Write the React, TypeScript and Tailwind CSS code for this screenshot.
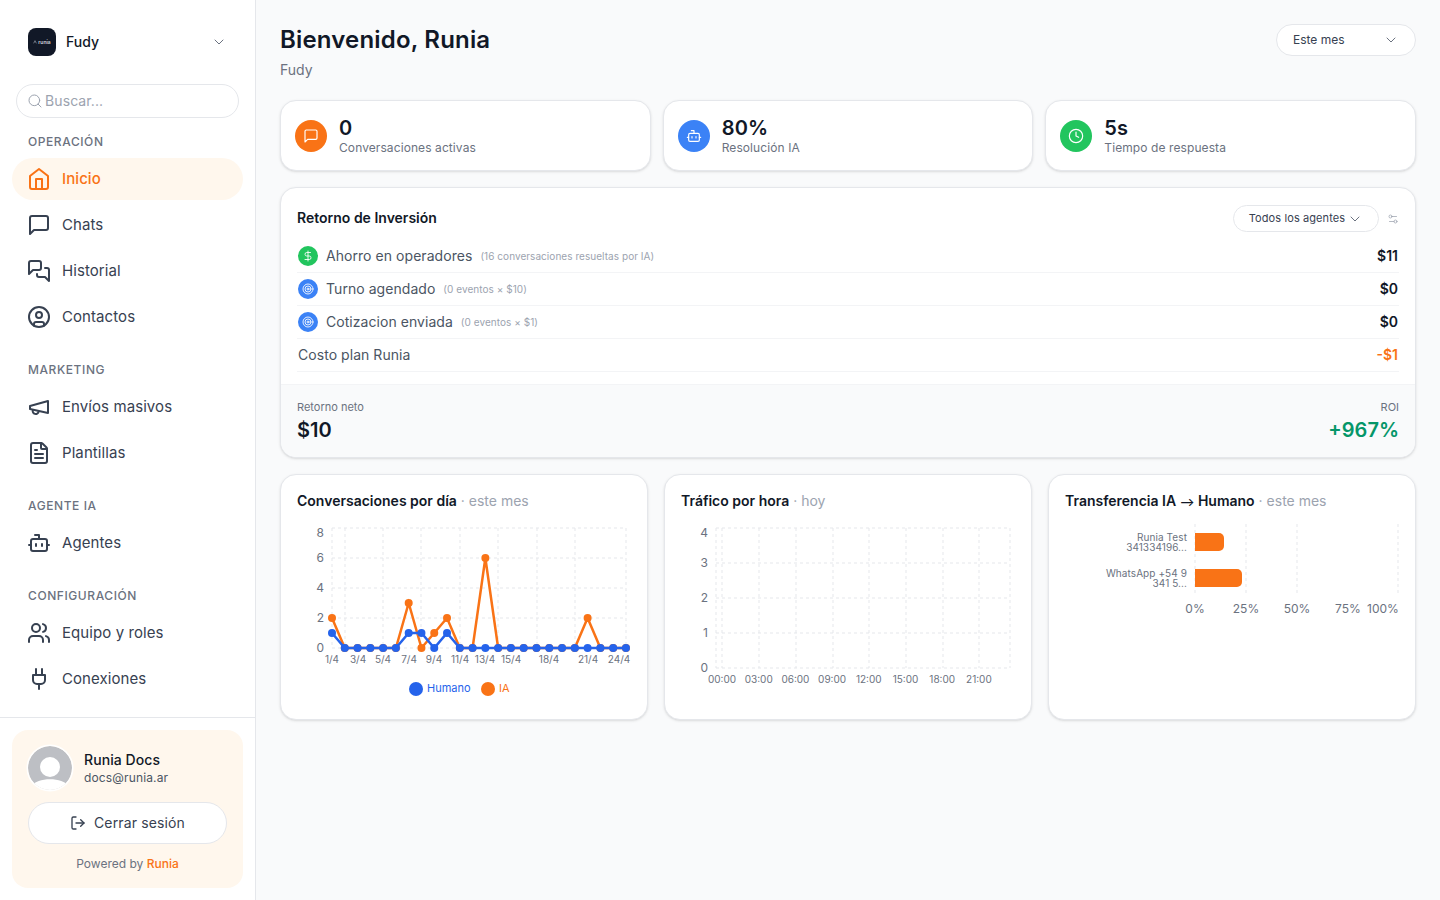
import {
  Bot,
  ChevronDown,
  Clock,
  DollarSign,
  FileText,
  LogOut,
  Search,
  Settings2,
  Target,
  Users,
  CircleUser,
} from "lucide-react";

type IconProps = { className?: string; strokeWidth?: number };

const svgProps = { viewBox: "0 0 24 24", fill: "none", stroke: "currentColor", strokeLinecap: "round", strokeLinejoin: "round" } as const;

const HomeIcon = ({ className, strokeWidth = 2 }: IconProps) => (
  <svg {...svgProps} strokeWidth={strokeWidth} className={className}>
    <path d="m3 9 9-7 9 7v11a2 2 0 0 1-2 2H5a2 2 0 0 1-2-2z" />
    <polyline points="9 22 9 12 15 12 15 22" />
  </svg>
);

const ChatIcon = ({ className, strokeWidth = 2 }: IconProps) => (
  <svg {...svgProps} strokeWidth={strokeWidth} className={className}>
    <path d="M21 15a2 2 0 0 1-2 2H7l-4 4V5a2 2 0 0 1 2-2h14a2 2 0 0 1 2 2z" />
  </svg>
);

const ChatsIcon = ({ className, strokeWidth = 2 }: IconProps) => (
  <svg {...svgProps} strokeWidth={strokeWidth} className={className}>
    <path d="M14 9a2 2 0 0 1-2 2H6l-4 4V4c0-1.1.9-2 2-2h8a2 2 0 0 1 2 2z" />
    <path d="M18 9h2a2 2 0 0 1 2 2v11l-4-4h-6a2 2 0 0 1-2-2v-1" />
  </svg>
);

const MegaphoneIcon = ({ className, strokeWidth = 2 }: IconProps) => (
  <svg {...svgProps} strokeWidth={strokeWidth} className={className}>
    <path d="m3 11 18-5v12L3 14v-3z" />
    <path d="M11.6 16.8a3 3 0 1 1-5.8-1.6" />
  </svg>
);

const PlugIcon = ({ className, strokeWidth = 2 }: IconProps) => (
  <svg {...svgProps} strokeWidth={strokeWidth} className={className}>
    <path d="M12 22v-5" />
    <path d="M9 8V2" />
    <path d="M15 8V2" />
    <path d="M18 8v5a4 4 0 0 1-4 4h-4a4 4 0 0 1-4-4V8Z" />
  </svg>
);

const navSections = [
  { label: "Operación", items: [{ name: "Inicio", icon: HomeIcon, active: true }, { name: "Chats", icon: ChatIcon }, { name: "Historial", icon: ChatsIcon }, { name: "Contactos", icon: CircleUser }] },
  { label: "Marketing", items: [{ name: "Envíos masivos", icon: MegaphoneIcon }, { name: "Plantillas", icon: FileText }] },
  { label: "Agente IA", items: [{ name: "Agentes", icon: Bot }] },
  { label: "Configuración", items: [{ name: "Equipo y roles", icon: Users }, { name: "Conexiones", icon: PlugIcon }] },
];

const Sidebar = () => (
  <aside className="flex h-screen w-[256px] shrink-0 flex-col border-r border-[#e5e7eb] bg-white">
    <div className="flex items-center pl-7 pr-[28px] pt-7">
      <div className="flex h-7 w-7 items-center justify-center gap-px rounded-lg bg-[#111827]">
        <svg viewBox="0 0 6 6" className="h-1 w-1 text-[#9ca3af]" fill="none" stroke="currentColor" strokeWidth="1">
          <path d="M1 5 3 1l2 4" />
        </svg>
        <span className="text-[5px] font-semibold leading-none text-[#d1d5db]">runia</span>
      </div>
      <span className="ml-2.5 text-sm font-medium text-[#111827]">Fudy</span>
      <ChevronDown className="ml-auto h-4 w-4 text-[#6b7280]" strokeWidth={1.5} />
    </div>
    <div className="mx-4 mt-7 flex h-[34px] items-center gap-0.5 rounded-full border border-[#e5e7eb] pl-[10px]">
      <Search className="h-4 w-4 text-[#9ca3af]" strokeWidth={1.5} />
      <span className="text-sm tracking-[0.1px] text-[#9ca3af]">Buscar...</span>
    </div>
    <nav>
      {navSections.map((section, i) => (
        <div key={section.label} className={i === 0 ? "mt-4" : "mt-6"}>
          <div className="px-7 text-xs font-medium uppercase leading-4 tracking-[0.58px] text-[#6b7280]">{section.label}</div>
          <div className="mt-2 flex flex-col gap-1 px-3">
            {section.items.map((item) => {
              const Icon = item.icon;
              const active = "active" in item && item.active;
              return (
                <div
                  key={item.name}
                  className={`flex h-[42px] items-center gap-[11px] rounded-full pl-[15px] text-[15px] tracking-[0.08px] ${
                    active ? "bg-[#fff7ed] font-medium text-[#f97316]" : "text-[#374151]"
                  }`}
                >
                  <Icon className="h-6 w-6" strokeWidth={2} />
                  {item.name}
                </div>
              );
            })}
          </div>
        </div>
      ))}
    </nav>
    <div className="mt-auto border-t border-[#e5e7eb] p-3">
      <div className="h-[158px] rounded-2xl bg-[#fff7ed] px-4 pt-4">
        <div className="flex items-center gap-3">
          <svg viewBox="0 0 44 44" className="h-11 w-11 rounded-full ring-[1.5px] ring-white">
            <circle cx="22" cy="22" r="22" fill="#bdbfc4" />
            <circle cx="22" cy="21" r="10" fill="#fff" />
            <path d="M4 40c4-9 32-9 36 0l-6 8H10z" fill="#fff" />
          </svg>
          <div>
            <div className="text-sm font-medium leading-[18px] tracking-[0.08px] text-[#111827]">Runia Docs</div>
            <div className="mt-px text-xs leading-4 tracking-[0.14px] text-[#4b5563]">docs@runia.ar</div>
          </div>
        </div>
        <div className="mt-3 flex h-[42px] items-center justify-center gap-2 rounded-full border border-[#e5e7eb] bg-white text-sm tracking-[0.14px] text-[#374151]">
          <LogOut className="h-4 w-4" strokeWidth={2} />
          Cerrar sesión
        </div>
        <div className="mt-3 text-center text-xs leading-4 text-[#6b7280]">
          Powered by <span className="font-medium text-[#f97316]">Runia</span>
        </div>
      </div>
    </div>
  </aside>
);

const stats = [
  { value: "0", label: "Conversaciones activas", icon: ChatIcon, bg: "bg-[#f97316]" },
  { value: "80%", label: "Resolución IA", icon: Bot, bg: "bg-[#3b82f6]" },
  { value: "5s", label: "Tiempo de respuesta", icon: Clock, bg: "bg-[#22c55e]" },
];

const StatCard = ({ stat }: { stat: (typeof stats)[number] }) => {
  const Icon = stat.icon;
  return (
    <div className="flex h-[71px] items-center gap-3 rounded-2xl border border-[#e5e7eb] bg-white px-3.5 shadow-sm">
      <div className={`flex h-8 w-8 items-center justify-center rounded-full text-white ${stat.bg}`}>
        <Icon className="h-4 w-4" strokeWidth={1.75} />
      </div>
      <div>
        <div className="text-xl font-semibold leading-6 tracking-[0.2px] text-[#111827]">{stat.value}</div>
        <div className="text-xs leading-4 tracking-[0.09px] text-[#6b7280]">{stat.label}</div>
      </div>
    </div>
  );
};

const roiRows = [
  { name: "Ahorro en operadores", note: "(16 conversaciones resueltas por IA)", value: "$11", icon: DollarSign, bg: "bg-[#22c55e]" },
  { name: "Turno agendado", note: "(0 eventos × $10)", value: "$0", icon: Target, bg: "bg-[#3b82f6]" },
  { name: "Cotizacion enviada", note: "(0 eventos × $1)", value: "$0", icon: Target, bg: "bg-[#3b82f6]" },
];

const RoiCard = () => (
  <div className="mt-4 overflow-hidden rounded-2xl border border-[#e5e7eb] bg-white shadow-sm">
    <div className="px-4 pb-3 pt-[17px]">
      <div className="flex items-center">
        <h2 className="-mt-px text-sm font-semibold text-[#111827]">Retorno de Inversión</h2>
        <div className="ml-auto flex h-[27px] w-[146px] items-center justify-center gap-0.5 rounded-full border border-[#e5e7eb] text-[11px] tracking-[0.1px] text-[#374151]">
          Todos los agentes
          <ChevronDown className="h-4 w-4 text-[#6b7280]" strokeWidth={1.5} />
        </div>
        <Settings2 className="ml-2 h-3 w-3 text-[#9ca3af]" strokeWidth={1.5} />
      </div>
      <div className="mt-2">
        {roiRows.map((row) => {
          const Icon = row.icon;
          return (
            <div key={row.name} className="flex h-[33px] items-center border-b border-[#f3f4f6] pl-px">
              <div className={`flex h-5 w-5 items-center justify-center rounded-full text-white ${row.bg}`}>
                <Icon className="h-3 w-3" strokeWidth={1.75} />
              </div>
              <span className="ml-2 text-sm tracking-[0.05px] text-[#4b5563]">{row.name}</span>
              <span className="ml-2 text-[10px] tracking-[0.05px] text-[#9ca3af]">{row.note}</span>
              <span className="ml-auto pr-px text-sm font-semibold text-[#111827]">{row.value}</span>
            </div>
          );
        })}
        <div className="flex h-[33px] items-center border-b border-[#f3f4f6] pl-px">
          <span className="text-sm tracking-[0.05px] text-[#4b5563]">Costo plan Runia</span>
          <span className="ml-auto pr-px text-sm font-semibold text-[#f97316]">-$1</span>
        </div>
      </div>
    </div>
    <div className="flex h-[73px] items-center justify-between border-t border-[#f3f4f6] bg-[#f9fafb] px-4 pt-px">
      <div>
        <div className="text-[11px] leading-4 text-[#6b7280]">Retorno neto</div>
        <div className="mt-px text-xl font-semibold leading-7 text-[#111827]">$10</div>
      </div>
      <div className="text-right">
        <div className="text-[11px] leading-4 text-[#6b7280]">ROI</div>
        <div className="mt-px text-xl font-semibold leading-7 text-[#059669]">+967%</div>
      </div>
    </div>
  </div>
);

const Grid = ({ xs, ys, x1, x2, y1, y2 }: { xs: number[]; ys: number[]; x1: number; x2: number; y1: number; y2: number }) => (
  <g stroke="#e5e7eb" strokeDasharray="3 3" strokeWidth="1" fill="none">
    {xs.map((x) => (
      <line key={`x${x}`} x1={x} x2={x} y1={y1} y2={y2} />
    ))}
    {ys.map((y) => (
      <line key={`y${y}`} x1={x1} x2={x2} y1={y} y2={y} />
    ))}
  </g>
);

const ia = [2, 0, 0, 0, 0, 0, 3, 0, 1, 2, 0, 0, 6, 0, 0, 0, 0, 0, 0, 0, 2, 0, 0, 0];
const humano = [1, 0, 0, 0, 0, 0, 1, 1, 0, 1, 0, 0, 0, 0, 0, 0, 0, 0, 0, 0, 0, 0, 0, 0];
const px = (i: number) => 332 + i * 12.78;
const py = (v: number) => 648 - v * 15;
const pts = (d: number[]) => d.map((v, i) => `${px(i)},${py(v)}`).join(" ");

const ConversationsChart = () => (
  <svg viewBox="297 520 334 190" className="mt-[9px] h-[190px] w-[334px]">
    <Grid xs={[332, 345, 383, 421, 460, 498, 537, 575, 626]} ys={[528, 558, 588, 618, 648]} x1={332} x2={626} y1={528} y2={648} />
    <g fontSize="12" fill="#6b7280" textAnchor="end">
      <text x="324" y="537">8</text>
      <text x="324" y="562">6</text>
      <text x="324" y="592">4</text>
      <text x="324" y="622">2</text>
      <text x="324" y="652">0</text>
    </g>
    <g fontSize="10" fill="#6b7280" textAnchor="middle">
      {[[332, "1/4"], [358, "3/4"], [383, "5/4"], [409, "7/4"], [434, "9/4"], [460, "11/4"], [485, "13/4"], [511, "15/4"], [549, "18/4"], [588, "21/4"], [619, "24/4"]].map(([x, t]) => (
        <text key={t} x={x} y="663">{t}</text>
      ))}
    </g>
    <polyline points={pts(ia)} fill="none" stroke="#f97316" strokeWidth="2.5" />
    {ia.map((v, i) => (
      <circle key={i} cx={px(i)} cy={py(v)} r="4" fill="#f97316" />
    ))}
    <polyline points={pts(humano)} fill="none" stroke="#2563eb" strokeWidth="2.5" />
    {humano.map((v, i) => (
      <circle key={i} cx={px(i)} cy={py(v)} r="4" fill="#2563eb" />
    ))}
    <circle cx="416" cy="689" r="7" fill="#2563eb" />
    <text x="427" y="692" fontSize="11" fill="#2563eb">Humano</text>
    <circle cx="488" cy="689" r="7" fill="#f97316" />
    <text x="499" y="692" fontSize="11" fill="#f97316">IA</text>
  </svg>
);

const TrafficChart = () => (
  <svg viewBox="681 520 334 190" className="mt-[9px] h-[190px] w-[334px]">
    <Grid xs={[716, 722, 759, 796, 833, 869, 906, 943, 979, 1010]} ys={[528, 563, 598, 633, 668]} x1={716} x2={1010} y1={528} y2={668} />
    <g fontSize="12" fill="#6b7280" textAnchor="end">
      <text x="708" y="537">4</text>
      <text x="708" y="567">3</text>
      <text x="708" y="602">2</text>
      <text x="708" y="637">1</text>
      <text x="708" y="672">0</text>
    </g>
    <g fontSize="10" fill="#6b7280" textAnchor="middle">
      {["00:00", "03:00", "06:00", "09:00", "12:00", "15:00", "18:00", "21:00"].map((t, i) => (
        <text key={t} x={722 + i * 36.7} y="683">{t}</text>
      ))}
    </g>
  </svg>
);

const TransferChart = () => (
  <svg viewBox="1065 520 334 190" className="mt-[9px] h-[190px] w-[334px]">
    <Grid xs={[1195, 1246, 1297, 1398]} ys={[]} x1={1195} x2={1398} y1={523} y2={592} />
    <path d="M1195 532h24a5 5 0 0 1 5 5v8a5 5 0 0 1-5 5h-24z" fill="#f97316" />
    <path d="M1195 568h42a5 5 0 0 1 5 5v8a5 5 0 0 1-5 5h-42z" fill="#f97316" />
    <g fontSize="10" fill="#6b7280" textAnchor="end" letterSpacing="0.08">
      <text x="1187" y="540">Runia Test</text>
      <text x="1187" y="550">341334196...</text>
      <text x="1187" y="576">WhatsApp +54 9</text>
      <text x="1187" y="586">341 5...</text>
    </g>
    <g fontSize="12" fill="#6b7280" textAnchor="middle">
      <text x="1195" y="612">0%</text>
      <text x="1246" y="612">25%</text>
      <text x="1297" y="612">50%</text>
      <text x="1348" y="612">75%</text>
      <text x="1383" y="612">100%</text>
    </g>
  </svg>
);

const ChartCard = ({ title, period, children }: { title: React.ReactNode; period: string; children: React.ReactNode }) => (
  <div className="h-[246px] rounded-2xl border border-[#e5e7eb] bg-white px-4 pt-4 shadow-sm">
    <div className="text-sm leading-5">
      <span className="font-semibold text-[#111827]">{title}</span>
      <span className="text-[#9ca3af]"> · {period}</span>
    </div>
    {children}
  </div>
);

export default function App() {
  return (
    <div className="flex h-screen bg-[#f9fafb] [font-family:Inter,sans-serif]">
      <Sidebar />
      <main className="flex-1 px-6 pt-6">
        <div className="mb-5 flex items-start justify-between">
          <div>
            <h1 className="text-2xl font-semibold leading-8 tracking-[0.18px] text-[#111827]">Bienvenido, Runia</h1>
            <p className="mt-1 text-sm leading-5 text-[#6b7280]">Fudy</p>
          </div>
          <div className="flex h-8 w-[140px] items-center justify-between rounded-full border border-[#e5e7eb] bg-white pl-4 pr-4 text-xs text-[#374151]">
            Este mes
            <ChevronDown className="h-4 w-4 text-[#6b7280]" strokeWidth={1.5} />
          </div>
        </div>
        <div className="grid grid-cols-3 gap-3">
          {stats.map((s) => (
            <StatCard key={s.label} stat={s} />
          ))}
        </div>
        <RoiCard />
        <div className="mt-4 grid grid-cols-3 gap-4">
          <ChartCard title="Conversaciones por día" period="este mes">
            <ConversationsChart />
          </ChartCard>
          <ChartCard title="Tráfico por hora" period="hoy">
            <TrafficChart />
          </ChartCard>
          <ChartCard
            title={
              <>
                Transferencia IA <span className="text-[11px]">⟶</span> Humano
              </>
            }
            period="este mes"
          >
            <TransferChart />
          </ChartCard>
        </div>
      </main>
    </div>
  );
}
